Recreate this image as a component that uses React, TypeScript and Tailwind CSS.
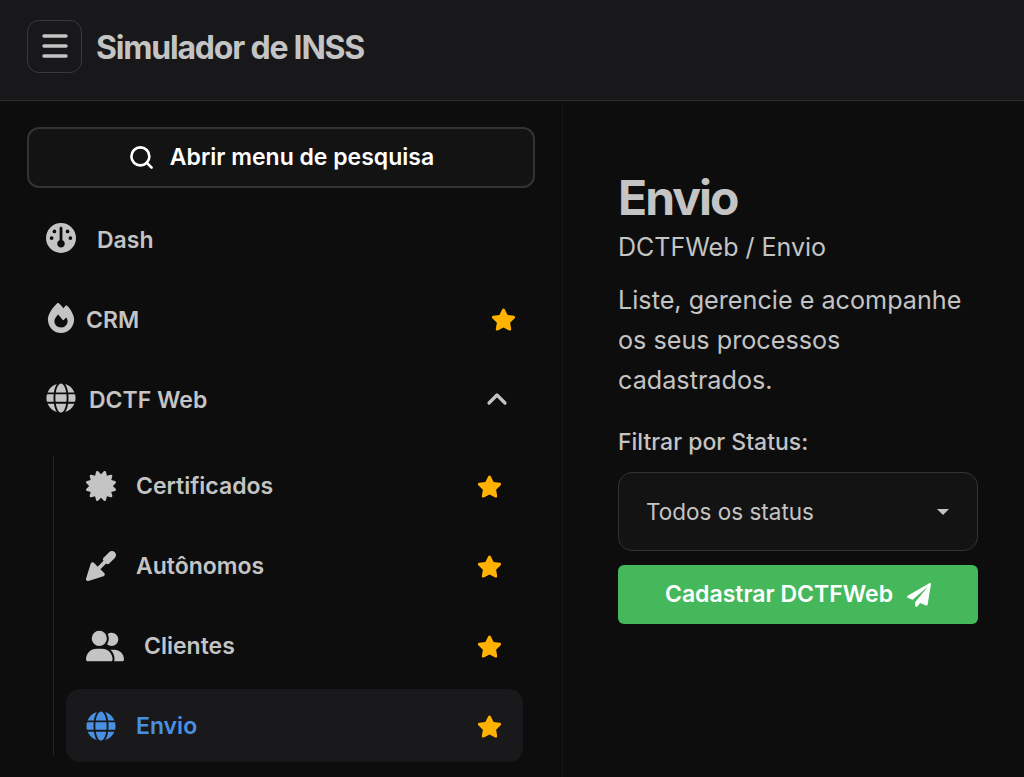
import type { ReactNode } from 'react';
import { ChevronUp, Search } from 'lucide-react';
import { FaCertificate, FaGlobe, FaPaperPlane, FaStar } from 'react-icons/fa';
import { FaFire, FaGauge, FaTrowel, FaUserGroup } from 'react-icons/fa6';

function Star() {
  return <FaStar className="text-[#ffb300] text-[25px] shrink-0" />;
}

function TopItem({ icon, label, gap, right }: { icon: ReactNode; label: string; gap: string; right?: ReactNode }) {
  return (
    <div className="h-[80px] flex items-center pl-[19px] pr-[19px] text-[#c4c4c4]">
      <div className={`flex items-center ${gap}`}>
        <span className="-mt-[4px]">{icon}</span>
        <span className="text-[23px] font-semibold">{label}</span>
      </div>
      <div className="ml-auto flex items-center -mt-[2px]">{right}</div>
    </div>
  );
}

function SubItem({ icon, label, gap, active }: { icon: ReactNode; label: string; gap: string; active?: boolean }) {
  return (
    <div
      className={`h-[73px] flex items-center pl-[20px] pr-[21px] rounded-[14px] ${
        active ? 'bg-[#19191b] text-[#4a90e2]' : 'text-[#c4c4c4]'
      }`}
    >
      <div className={`flex items-center ${gap}`}>
        {icon}
        <span className="text-[23px] font-semibold pt-[2px]">{label}</span>
      </div>
      <div className="ml-auto pt-[1px]">
        <Star />
      </div>
    </div>
  );
}

export default function App() {
  return (
    <div className="w-[1024px] h-[777px] overflow-hidden bg-[#0d0d0e] font-['Inter',sans-serif]">
      {/* Top bar */}
      <header className="h-[101px] bg-[#18181b] border-b border-[#2c2c2e] flex items-center px-[27px] pb-[8px] gap-[14px]">
        <button className="w-[55px] h-[53px] rounded-[12px] border border-[#3a3a3c] flex items-center justify-center text-[#c4c4c4]">
          <svg width="26" height="24" viewBox="0 0 26 24" fill="none" stroke="currentColor" strokeWidth="3.4" strokeLinecap="round">
            <path d="M2 2h22M2 12h22M2 22h22" />
          </svg>
        </button>
        <h1 className="text-[32px] font-bold text-[#c4c4c4] tracking-[-1.2px] pt-[4px]">Simulador de INSS</h1>
      </header>

      <div className="flex">
        {/* Sidebar */}
        <aside className="w-[563px] h-[676px] border-r border-[#161618] pt-[26px] pl-[27px] pr-[27px] shrink-0">
          <button className="w-[508px] h-[61px] rounded-[12px] border-2 border-[#333335] bg-[#131313] flex items-center justify-center gap-[15px] text-white">
            <Search size={27} strokeWidth={2.3} />
            <span className="text-[23px] font-semibold">Abrir menu de pesquisa</span>
          </button>

          <div className="mt-[12px]">
            <TopItem icon={<FaGauge className="text-[30px]" />} label="Dash" gap="gap-[21px]" />
            <TopItem icon={<FaFire className="text-[30px]" />} label="CRM" gap="gap-[10px]" right={<Star />} />
            <TopItem
              icon={<FaGlobe className="text-[30px]" />}
              label="DCTF Web"
              gap="gap-[13px]"
              right={<ChevronUp size={32} strokeWidth={2.4} className="mr-[3px]" />}
            />
          </div>

          {/* Submenu with guide line */}
          <div className="flow-root mt-[16px] ml-[26px] border-l border-[#252527] pl-[12px] pr-[12px] h-[299px]">
            <div className="-mt-[7px] flex flex-col gap-[7px]">
              <SubItem icon={<FaCertificate className="text-[30px]" />} label="Certificados" gap="gap-[20px]" />
              <SubItem icon={<FaTrowel className="text-[30px]" />} label="Autônomos" gap="gap-[20px]" />
              <SubItem icon={<FaUserGroup className="text-[38px]" />} label="Clientes" gap="gap-[20px]" />
              <SubItem icon={<FaGlobe className="text-[30px]" />} label="Envio" gap="gap-[20px]" active />
            </div>
          </div>
        </aside>

        {/* Main */}
        <main className="flex-1 pl-[55px] pr-[46px] pt-[67px] text-[#c4c4c4]">
          <h2 className="text-[48px] leading-[60px] font-bold tracking-[-2px]">Envio</h2>
          <p className="text-[25px] leading-[32px] mt-[3px]">DCTFWeb / Envio</p>
          <p className="text-[25.2px] leading-[40px] mt-[17px]">Liste, gerencie e acompanhe os seus processos cadastrados.</p>
          <label className="block text-[23px] leading-[28px] font-medium mt-[28px]">Filtrar por Status:</label>
          <div className="mt-[16px] h-[79px] rounded-[14px] border border-[#333335] bg-[#131313] flex items-center justify-between pl-[27px] pr-[28px]">
            <span className="text-[22.5px]">Todos os status</span>
            <span className="w-0 h-0 border-x-[6px] border-x-transparent border-t-[6px] border-t-[#c4c4c4]" />
          </div>
          <button className="mt-[14px] w-full h-[59px] rounded-[6px] bg-[#45b85c] flex items-center justify-center gap-[14px] text-white">
            <span className="text-[23px] font-semibold">Cadastrar DCTFWeb</span>
            <FaPaperPlane className="text-[24px]" />
          </button>
        </main>
      </div>
    </div>
  );
}
